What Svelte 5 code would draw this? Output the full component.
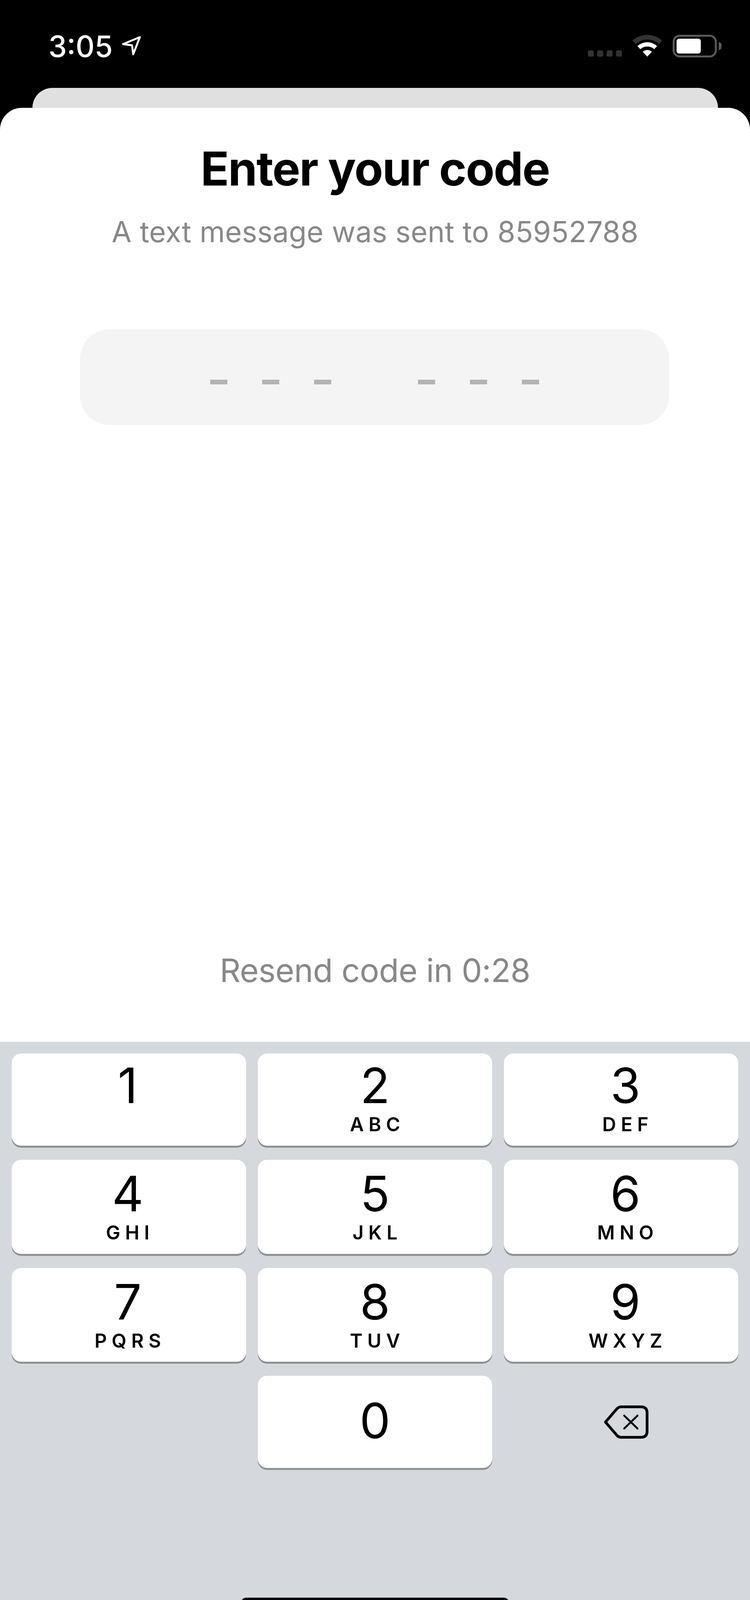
<script lang="ts">
    const digits = [
        { n: '1', l: '' },
        { n: '2', l: 'ABC' },
        { n: '3', l: 'DEF' },
        { n: '4', l: 'GHI' },
        { n: '5', l: 'JKL' },
        { n: '6', l: 'MNO' },
        { n: '7', l: 'PQRS' },
        { n: '8', l: 'TUV' },
        { n: '9', l: 'WXYZ' }
    ]

    // middle slot stays blank, it splits the code in two groups
    const slots = [true, true, true, false, true, true, true]
</script>

<div class="screen">
    <header class="status">
        <div class="clock">
            <span class="time">3:05</span>
            <svg class="arrow" width="50" height="50" viewBox="0 0 50 50">
                <path d="M47 3 L4 21 L27 24 L30 47 Z" fill="none" stroke="#fff" stroke-width="5" stroke-linejoin="round" />
            </svg>
        </div>
        <div class="indicators">
            <div class="signal"><i></i><i></i><i></i><i></i></div>
            <svg class="wifi" width="76" height="56" viewBox="0 0 76 56">
                <path d="M0 15 A56 56 0 0 1 76 15 L68 24 A44 44 0 0 0 8 24 Z" fill="#333" />
                <path d="M12.8 29 A37 37 0 0 1 63.2 29 L55.7 37 A26 26 0 0 0 20.3 37 Z" fill="#fff" />
                <path d="M26.4 43.6 A17 17 0 0 1 49.6 43.6 L38 56 Z" fill="#fff" />
            </svg>
            <div class="battery">
                <div class="shell"><div class="level"></div></div>
                <div class="cap"></div>
            </div>
        </div>
    </header>

    <div class="peek"></div>

    <main class="sheet">
        <h1>Enter your code</h1>
        <p class="sub">A text message was sent to 85952788</p>
        <div class="code">
            {#each slots as filled}
                <span class="slot" class:filled></span>
            {/each}
        </div>
        <p class="resend">Resend code in 0:28</p>
    </main>

    <section class="keyboard">
        <div class="keys">
            {#each digits as d}
                <button class="key">
                    <span class="num">{d.n}</span>
                    {#if d.l}<span class="letters">{d.l}</span>{/if}
                </button>
            {/each}
            <div class="blank"></div>
            <button class="key zero"><span class="num">0</span></button>
            <button class="backspace" aria-label="Delete">
                <svg width="115" height="85" viewBox="0 0 115 85" fill="none" stroke="#000">
                    <path d="M45 3.5 H96 Q111.5 3.5 111.5 19 V66 Q111.5 81.5 96 81.5 H45 Q38 81.5 33 75 L5 42.5 L33 10 Q38 3.5 45 3.5 Z" stroke-width="7" stroke-linejoin="round" />
                    <path d="M53 26 L87 59 M87 26 L53 59" stroke-width="5" stroke-linecap="round" />
                </svg>
            </button>
        </div>
        <div class="home-bar"></div>
    </section>
</div>

<style>
    :global(body) {
        background: #000;
    }

    .screen {
        display: flex;
        flex-direction: column;
        width: 1920px;
        height: 4157px;
        font-family: Inter, 'Liberation Sans', sans-serif;
        overflow: hidden;
    }

    .status {
        display: flex;
        justify-content: space-between;
        flex: none;
        height: 225px;
        box-sizing: border-box;
        padding: 74px 73px 0 124px;
        color: #fff;
    }

    .clock {
        display: flex;
        align-items: flex-start;
        gap: 22px;
    }

    .time {
        font-size: 75px;
        line-height: 90px;
        font-weight: 500;
    }

    .arrow {
        margin-top: 18px;
    }

    .indicators {
        display: flex;
        align-items: flex-start;
        margin-top: 15px;
    }

    .signal {
        display: flex;
        gap: 9px;
        margin-top: 40px;
    }

    .signal i {
        width: 15px;
        height: 16px;
        border-radius: 4px;
        background: #333;
    }

    .wifi {
        margin-left: 27px;
    }

    .battery {
        display: flex;
        align-items: center;
        gap: 5px;
        margin-left: 27px;
    }

    .shell {
        width: 113px;
        height: 58px;
        box-sizing: border-box;
        padding: 5px;
        border: 5px solid #5a5a5a;
        border-radius: 18px;
    }

    .level {
        width: 62px;
        height: 100%;
        border-radius: 6px;
        background: #fff;
    }

    .cap {
        width: 7px;
        height: 20px;
        border-radius: 0 10px 10px 0;
        background: #5a5a5a;
    }

    .peek {
        flex: none;
        height: 51px;
        margin: 0 82px 0 83px;
        border-radius: 52px 52px 0 0;
        background: #e0e0e0;
    }

    .sheet {
        display: flex;
        flex-direction: column;
        align-items: center;
        flex: none;
        height: 2391px;
        box-sizing: border-box;
        padding: 86px 0 133px;
        border-radius: 56px 56px 0 0;
        background: #fff;
    }

    h1 {
        margin: 0;
        font-size: 120px;
        line-height: 140px;
        font-weight: 700;
        letter-spacing: -2.2px;
        color: #000;
    }

    .sub {
        margin: 46px 0 0;
        font-size: 74px;
        line-height: 90px;
        letter-spacing: 0.2px;
        color: #888;
    }

    .code {
        display: flex;
        align-items: center;
        justify-content: center;
        gap: 89px;
        width: 1508px;
        height: 245px;
        box-sizing: border-box;
        margin: 205px 2px 0 0;
        padding-top: 25px;
        border-radius: 76px;
        background: #f4f4f4;
    }

    .slot {
        width: 44px;
        height: 12px;
    }

    .slot.filled {
        background: #b3b3b3;
    }

    .resend {
        margin: auto 0 0;
        font-size: 83px;
        line-height: 100px;
        letter-spacing: -0.6px;
        color: #888;
    }

    .keyboard {
        flex: 1;
        padding-top: 30px;
        background: #d5d8dd;
    }

    .keys {
        display: grid;
        grid-template-columns: repeat(3, 600px);
        grid-template-rows: 236px 241px 240px 236px;
        gap: 36px 30px;
        padding: 0 30px;
    }

    .key {
        display: flex;
        flex-direction: column;
        align-items: center;
        box-sizing: border-box;
        padding: 37px 0 0;
        border: none;
        border-radius: 24px;
        background: #fff;
        box-shadow: 0 5px 0 #8e9094;
        color: #000;
        font-family: inherit;
    }

    .key:nth-child(-n + 3) {
        padding-top: 32px;
    }

    /* the side columns sit slightly off the key centre, same as the system keypad */
    .key:nth-child(3n + 1) {
        padding-right: 6px;
    }

    .key:nth-child(3n) {
        padding-left: 22px;
    }

    .key.zero {
        padding-top: 65px;
    }

    .num {
        font-size: 125px;
        line-height: 100px;
        font-weight: 400;
    }

    .letters {
        margin-top: 30px;
        font-size: 49px;
        line-height: 40px;
        font-weight: 600;
        letter-spacing: 0.25em;
        margin-right: -0.25em;
    }

    .backspace {
        display: flex;
        align-items: center;
        justify-content: center;
        padding: 0 0 0 25px;
        border: none;
        background: none;
    }

    .home-bar {
        width: 686px;
        height: 26px;
        margin: 332px auto 0;
        border-radius: 13px;
        background: #000;
    }
</style>
